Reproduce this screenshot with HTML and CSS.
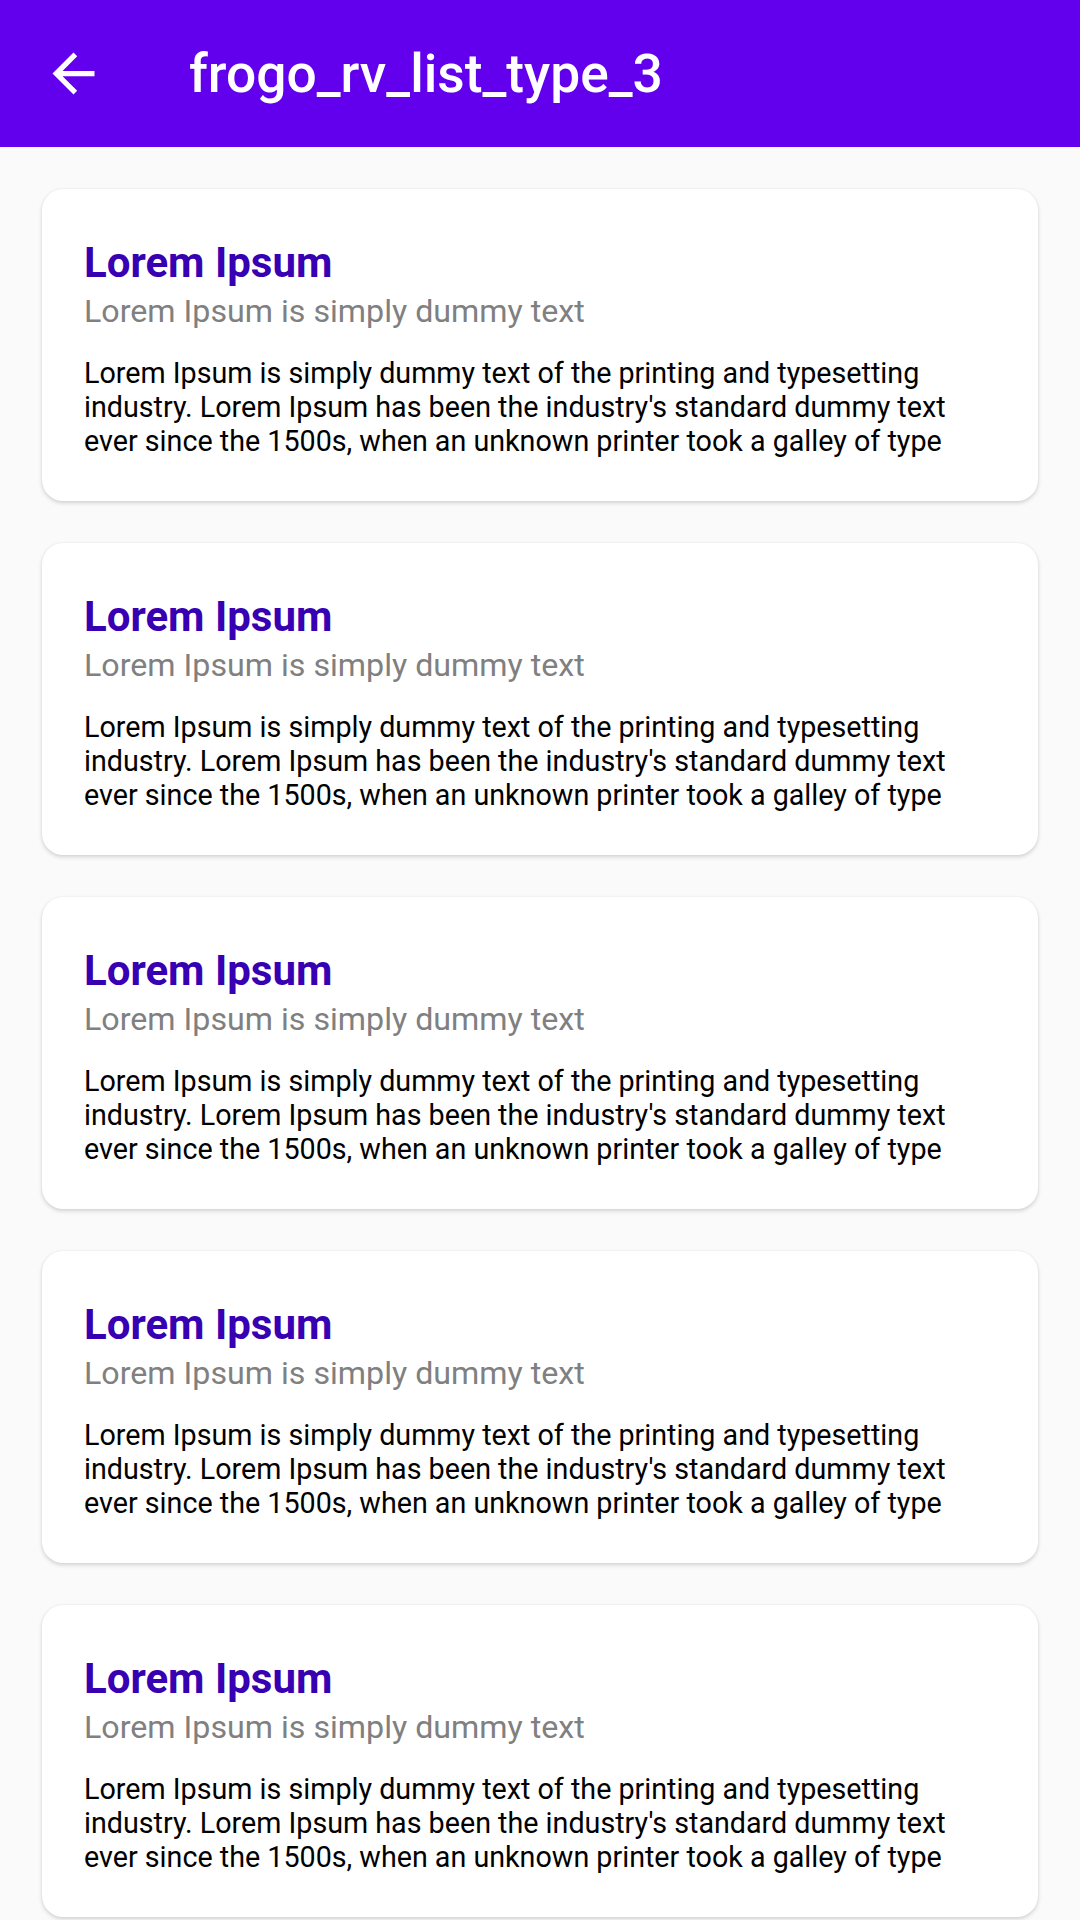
FILE: index.html
```html
<!DOCTYPE html>
<html>
<head>
<meta charset="utf-8">
<link rel="stylesheet" href="styles.css">
</head>
<body>
<header class="toolbar">
  <div class="nav">
    <svg class="nav-icon" viewBox="0 0 24 24"><path d="M20 11H7.83l5.59-5.59L12 4l-8 8 8 8 1.41-1.41L7.83 13H20v-2z" fill="#fff"/></svg>
  </div>
  <h1 class="title">frogo_rv_list_type_3</h1>
</header>
<main class="list">
  <div class="card">
    <div class="card-title">Lorem Ipsum</div>
    <div class="card-sub">Lorem Ipsum is simply dummy text</div>
    <p class="card-body">Lorem Ipsum is simply dummy text of the printing and typesetting industry. Lorem Ipsum has been the industry's standard dummy text ever since the 1500s, when an unknown printer took a galley of type</p>
  </div>
  <div class="card">
    <div class="card-title">Lorem Ipsum</div>
    <div class="card-sub">Lorem Ipsum is simply dummy text</div>
    <p class="card-body">Lorem Ipsum is simply dummy text of the printing and typesetting industry. Lorem Ipsum has been the industry's standard dummy text ever since the 1500s, when an unknown printer took a galley of type</p>
  </div>
  <div class="card">
    <div class="card-title">Lorem Ipsum</div>
    <div class="card-sub">Lorem Ipsum is simply dummy text</div>
    <p class="card-body">Lorem Ipsum is simply dummy text of the printing and typesetting industry. Lorem Ipsum has been the industry's standard dummy text ever since the 1500s, when an unknown printer took a galley of type</p>
  </div>
  <div class="card">
    <div class="card-title">Lorem Ipsum</div>
    <div class="card-sub">Lorem Ipsum is simply dummy text</div>
    <p class="card-body">Lorem Ipsum is simply dummy text of the printing and typesetting industry. Lorem Ipsum has been the industry's standard dummy text ever since the 1500s, when an unknown printer took a galley of type</p>
  </div>
  <div class="card">
    <div class="card-title">Lorem Ipsum</div>
    <div class="card-sub">Lorem Ipsum is simply dummy text</div>
    <p class="card-body">Lorem Ipsum is simply dummy text of the printing and typesetting industry. Lorem Ipsum has been the industry's standard dummy text ever since the 1500s, when an unknown printer took a galley of type</p>
  </div>
</main>
</body>
</html>
```

FILE: styles.css
```css
* { box-sizing: border-box; }
html, body {
  margin: 0;
  padding: 0;
  width: 1080px;
  height: 1920px;
  overflow: hidden;
  background: #fafafa;
  font-family: Roboto, "Liberation Sans", sans-serif;
}
.toolbar {
  height: 147px;
  background: #6200ee;
  display: flex;
  align-items: center;
}
.nav {
  width: 147px;
  height: 147px;
  flex: none;
  display: flex;
  align-items: center;
  justify-content: center;
}
.nav-icon {
  width: 63px;
  height: 63px;
  display: block;
}
.title {
  margin: 0 0 0 42px;
  color: #fff;
  font-size: 53.3px;
  font-weight: 500;
  line-height: 62px;
}
.list {
  padding: 42px 42px 0;
  display: flex;
  flex-direction: column;
  gap: 42px;
}
.card {
  background: #fff;
  border-radius: 21px;
  height: 312px;
  flex: none;
  padding: 49px 42px 0;
  box-shadow: 0 2px 4px rgba(0,0,0,0.16), 0 0 2px rgba(0,0,0,0.06);
}
.card-title {
  color: #3700b3;
  font-size: 42px;
  font-weight: 700;
  line-height: 49px;
}
.card-sub {
  margin-top: 6px;
  color: #808080;
  font-size: 32.2px;
  line-height: 37px;
}
.card-body {
  margin: 26px 0 0;
  color: #000;
  font-size: 28.7px;
  line-height: 34px;
}
```
